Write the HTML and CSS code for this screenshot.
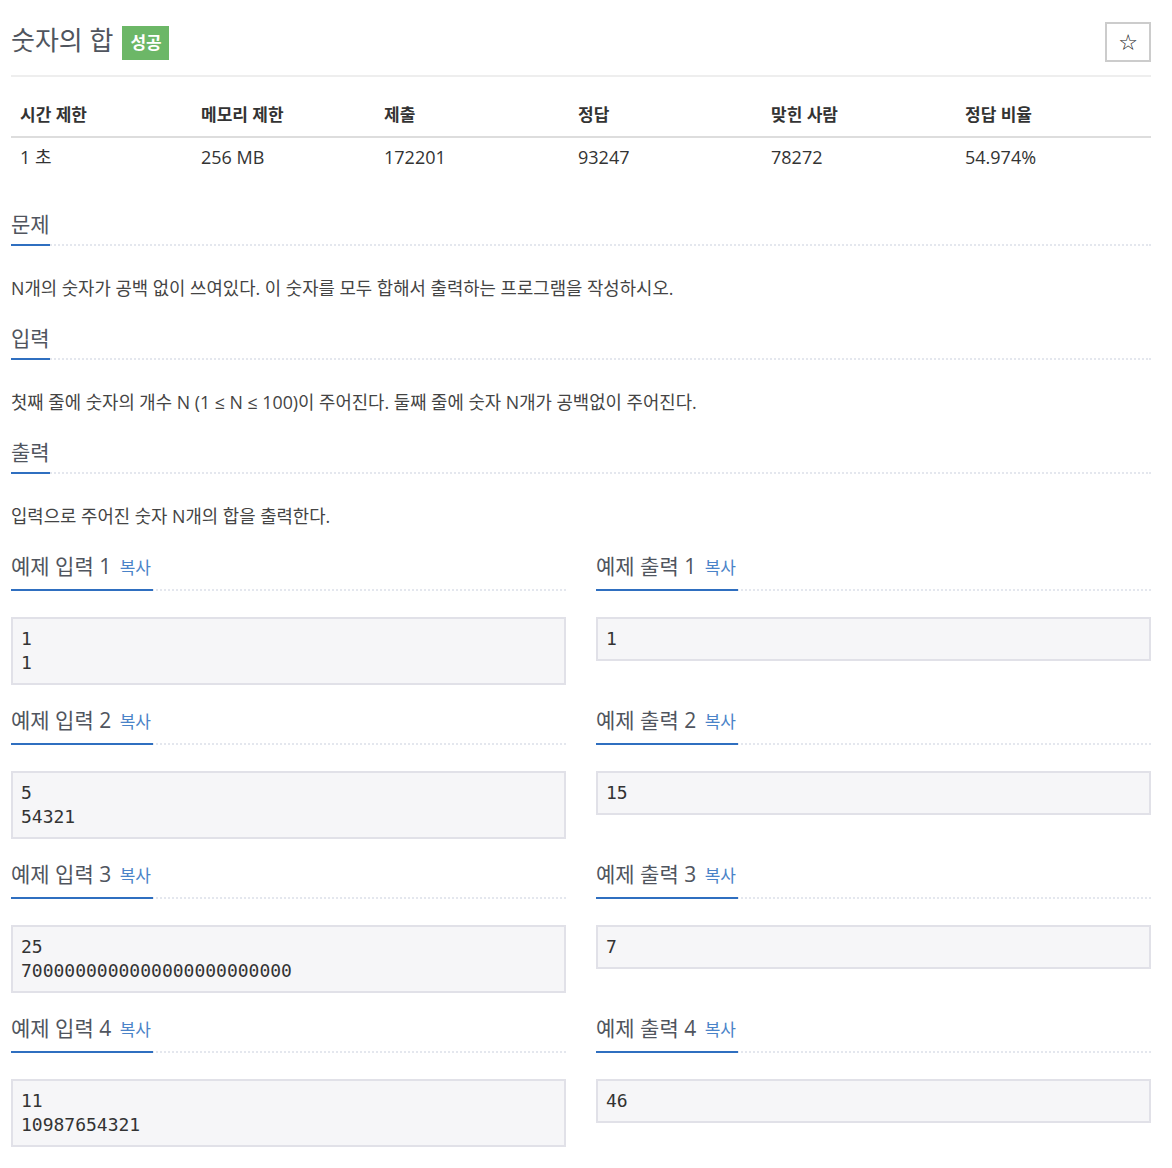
FILE: index.html
```html
<!DOCTYPE html>
<html lang="ko">
<head>
    <meta charset="UTF-8">
    <meta name="viewport" content="width=device-width, initial-scale=1.0">
    <title>숫자의 합</title>
    <link rel="stylesheet" href="styles.css">
</head>
<body>
    <div class="container">
        <div class="title-row">
            <h1 class="title">숫자의 합 <span class="badge">성공</span></h1>
            <button class="star-button">☆</button>
        </div>

        <table class="info-table">
            <thead>
                <tr>
                    <th>시간 제한</th>
                    <th>메모리 제한</th>
                    <th>제출</th>
                    <th>정답</th>
                    <th>맞힌 사람</th>
                    <th>정답 비율</th>
                </tr>
            </thead>
            <tbody>
                <tr>
                    <td>1 초</td>
                    <td>256 MB</td>
                    <td>172201</td>
                    <td>93247</td>
                    <td>78272</td>
                    <td>54.974%</td>
                </tr>
            </tbody>
        </table>

        <section class="problem-section">
            <div class="headline"><h2>문제</h2></div>
            <p>N개의 숫자가 공백 없이 쓰여있다. 이 숫자를 모두 합해서 출력하는 프로그램을 작성하시오.</p>
        </section>

        <section class="problem-section">
            <div class="headline"><h2>입력</h2></div>
            <p>첫째 줄에 숫자의 개수 N (1 ≤ N ≤ 100)이 주어진다. 둘째 줄에 숫자 N개가 공백없이 주어진다.</p>
        </section>

        <section class="problem-section">
            <div class="headline"><h2>출력</h2></div>
            <p>입력으로 주어진 숫자 N개의 합을 출력한다.</p>
        </section>

        <div class="sample-row">
            <div class="sample">
                <div class="headline sample-headline"><h2>예제 입력 1 <a class="copy">복사</a></h2></div>
                <pre class="sampledata">1
1</pre>
            </div>
            <div class="sample">
                <div class="headline sample-headline"><h2>예제 출력 1 <a class="copy">복사</a></h2></div>
                <pre class="sampledata">1</pre>
            </div>
        </div>

        <div class="sample-row">
            <div class="sample">
                <div class="headline sample-headline"><h2>예제 입력 2 <a class="copy">복사</a></h2></div>
                <pre class="sampledata">5
54321</pre>
            </div>
            <div class="sample">
                <div class="headline sample-headline"><h2>예제 출력 2 <a class="copy">복사</a></h2></div>
                <pre class="sampledata">15</pre>
            </div>
        </div>

        <div class="sample-row">
            <div class="sample">
                <div class="headline sample-headline"><h2>예제 입력 3 <a class="copy">복사</a></h2></div>
                <pre class="sampledata">25
7000000000000000000000000</pre>
            </div>
            <div class="sample">
                <div class="headline sample-headline"><h2>예제 출력 3 <a class="copy">복사</a></h2></div>
                <pre class="sampledata">7</pre>
            </div>
        </div>

        <div class="sample-row">
            <div class="sample">
                <div class="headline sample-headline"><h2>예제 입력 4 <a class="copy">복사</a></h2></div>
                <pre class="sampledata">11
10987654321</pre>
            </div>
            <div class="sample">
                <div class="headline sample-headline"><h2>예제 출력 4 <a class="copy">복사</a></h2></div>
                <pre class="sampledata">46</pre>
            </div>
        </div>
    </div>
</body>
</html>
```

FILE: styles.css
```css
body {
    font-family: "Open Sans", "Noto Sans CJK KR", sans-serif;
    color: #333;
    margin: 0;
    background-color: white;
}
.container {
    width: 1140px;
    margin-left: 11px;
    padding-top: 22px;
}

/* Title */
.title-row {
    display: flex;
    justify-content: space-between;
    align-items: flex-start;
    padding-bottom: 13px;
    border-bottom: 2px solid #eeeeee;
}
.title {
    display: flex;
    align-items: flex-start;
    margin: 0;
    font-size: 26px;
    line-height: 36px;
    font-weight: normal;
    color: #50555e;
}
.badge {
    margin-top: 4px;
    margin-left: 9px;
    padding: 0 7px 0 8px;
    height: 34px;
    line-height: 34px;
    font-size: 17px;
    font-weight: bold;
    color: white;
    background-color: #6cb767;
}
.star-button {
    width: 46px;
    height: 40px;
    padding: 0;
    font-size: 22px;
    color: #222;
    background-color: white;
    border: 2px solid #cccccc;
    font-family: "DejaVu Sans", sans-serif;
}

/* Info table */
.info-table {
    width: 100%;
    margin-top: 18px;
    border-collapse: collapse;
    table-layout: fixed;
    font-size: 17px;
}
.info-table th,
.info-table td {
    box-sizing: border-box;
}
.info-table th:nth-child(1) { width: 181px; }
.info-table th:nth-child(2) { width: 183px; }
.info-table th:nth-child(3) { width: 194px; }
.info-table th:nth-child(4) { width: 193px; }
.info-table th:nth-child(5) { width: 194px; }
.info-table th {
    text-align: left;
    font-weight: bold;
    line-height: 24px;
    padding: 8px 9px 9px;
    border-bottom: 2px solid #dddddd;
}
.info-table td {
    font-size: 18px;
    line-height: 24px;
    padding: 7px 9px 8px;
}

/* Sections */
.headline {
    border-bottom: 2px dotted #e4e7ee;
}
.headline h2 {
    display: inline-block;
    margin: 0 0 -2px;
    padding-bottom: 5px;
    font-size: 21px;
    line-height: 30px;
    font-weight: normal;
    color: #50555e;
    border-bottom: 2px solid #2f6fc0;
}
.problem-section {
    margin-top: 32px;
}
.problem-section + .problem-section {
    margin-top: 22px;
}
.problem-section p {
    margin: 29px 0 0;
    font-size: 17.8px;
    line-height: 26px;
    color: #444;
}

/* Samples */
.sample-row {
    display: grid;
    grid-template-columns: 1fr 1fr;
    column-gap: 30px;
    margin-top: 20px;
}
.problem-section + .sample-row {
    margin-top: 22px;
}
.sample-headline h2 {
    padding-bottom: 6px;
    padding-right: 2px;
}
.copy {
    margin-left: 3px;
    font-size: 17px;
    color: #4a83c8;
    cursor: pointer;
}
.sampledata {
    margin: 26px 0 0;
    padding: 8px;
    font-family: "DejaVu Sans Mono", monospace;
    font-size: 18px;
    line-height: 24px;
    color: #333;
    background-color: #f6f6f8;
    border: 2px solid #e1e1e8;
}
```
